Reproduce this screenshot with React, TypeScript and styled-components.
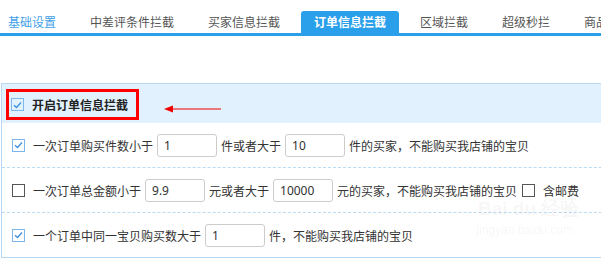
import styled, { createGlobalStyle } from "styled-components";

const GlobalStyle = createGlobalStyle`
  html, body {
    margin: 0;
    padding: 0;
    background: #fff;
    width: 601px;
    height: 267px;
    overflow: hidden;
  }
  body {
    font-family: "Noto Sans CJK SC", "Noto Sans", sans-serif;
    font-size: 12px;
    color: #333;
  }
`;

const Page = styled.div`
  position: relative;
  width: 601px;
  height: 267px;
  overflow: hidden;
`;

const TabBar = styled.div`
  display: flex;
  gap: 8px;
  padding-top: 11px;
  margin-left: -5px;
  width: 620px;
  border-bottom: 3px solid #2aa0ea;
  white-space: nowrap;
`;

const Tab = styled.div<{ $active?: boolean; $first?: boolean }>`
  height: 22px;
  line-height: 22px;
  padding: 0 13px;
  font-size: 12px;
  border-radius: 3px 3px 0 0;
  flex-shrink: 0;
  background: ${(p) => (p.$active ? "#2aa0ea" : "transparent")};
  color: ${(p) => (p.$active ? "#fff" : p.$first ? "#3f9fe8" : "#555")};
  font-weight: ${(p) => (p.$active ? 700 : 400)};
`;

const Panel = styled.div`
  margin: 47px 0 0 1px;
  width: 640px;
  border: 1px solid #b7d7f3;
`;

const Header = styled.div`
  height: 39px;
  box-sizing: border-box;
  padding: 5px 0 0 4px;
  background: #e1f1fd;
  display: flex;
  align-items: flex-start;
`;

const RedBox = styled.div`
  height: 31px;
  box-sizing: border-box;
  border: 3px solid #f00;
  padding: 0 8px 0 2px;
  display: flex;
  align-items: center;
  gap: 8px;
`;

const HeaderText = styled.span`
  font-weight: 700;
  font-size: 12px;
  color: #222;
`;

const Arrow = styled.svg`
  margin: 16px 0 0 25px;
`;

const Row = styled.div<{ $last?: boolean }>`
  height: 44px;
  display: flex;
  align-items: center;
  padding-left: 10px;
  white-space: nowrap;
  border-bottom: ${(p) => (p.$last ? "none" : "1px dashed #b9dcf6")};
`;

const Label = styled.span`
  margin-left: 8px;
  color: #333;
`;

const Text = styled.span`
  color: #333;
`;

const Field = styled.input`
  width: 60px;
  height: 23px;
  box-sizing: border-box;
  margin: 0 4px;
  padding: 0 6px;
  border: 1px solid #ccc;
  border-radius: 3px;
  font-family: "Noto Sans", sans-serif;
  font-size: 12px;
  color: #333;
  outline: none;
`;

const Box = styled.span<{ $checked?: boolean }>`
  width: 13px;
  height: 13px;
  box-sizing: border-box;
  flex-shrink: 0;
  border: 1px solid ${(p) => (p.$checked ? "#7db6ec" : "#555")};
  display: flex;
  align-items: center;
  justify-content: center;
`;

const ExtraBox = styled.span`
  margin: 0 8px 0 5px;
  display: flex;
`;

const Watermark = styled.div`
  position: absolute;
  left: 470px;
  top: 196px;
  color: rgba(0, 0, 0, 0.05);
  font-family: "Liberation Sans", sans-serif;
  pointer-events: none;
  text-align: center;
`;

const WmTop = styled.div`
  font-size: 19px;
  font-weight: 700;
  line-height: 26px;
  padding-left: 8px;
`;

const WmUrl = styled.div`
  font-size: 12px;
  line-height: 16px;
`;

const Check = ({ checked }: { checked?: boolean }) => (
  <Box $checked={checked}>
    {checked && (
      <svg width="9" height="8" viewBox="0 0 9 8">
        <path d="M1 4.2 L3.5 6.5 L8 1.5" fill="none" stroke="#3d8fe0" strokeWidth="1.3" />
      </svg>
    )}
  </Box>
);

const tabs = ["基础设置", "中差评条件拦截", "买家信息拦截", "订单信息拦截", "区域拦截", "超级秒拦", "商品"];

export default function App() {
  return (
    <Page>
      <GlobalStyle />
      <TabBar>
        {tabs.map((t, i) => (
          <Tab key={t} $active={i === 3} $first={i === 0}>
            {t}
          </Tab>
        ))}
      </TabBar>
      <Panel>
        <Header>
          <RedBox>
            <Check checked />
            <HeaderText>开启订单信息拦截</HeaderText>
          </RedBox>
          <Arrow width="57" height="8" viewBox="0 0 57 8">
            <path d="M0 4 L9 0.5 L9 7.5 Z" fill="#e00" />
            <line x1="8" y1="4" x2="57" y2="4" stroke="#e00" strokeWidth="1.2" />
          </Arrow>
        </Header>
        <Row>
          <Check checked />
          <Label>一次订单购买件数小于</Label>
          <Field defaultValue="1" />
          <Text>件或者大于</Text>
          <Field defaultValue="10" />
          <Text>件的买家，不能购买我店铺的宝贝</Text>
        </Row>
        <Row>
          <Check />
          <Label>一次订单总金额小于</Label>
          <Field defaultValue="9.9" />
          <Text>元或者大于</Text>
          <Field defaultValue="10000" />
          <Text>元的买家，不能购买我店铺的宝贝</Text>
          <ExtraBox>
            <Check />
          </ExtraBox>
          <Text>含邮费</Text>
        </Row>
        <Row $last>
          <Check checked />
          <Label>一个订单中同一宝贝购买数大于</Label>
          <Field defaultValue="1" />
          <Text>件，不能购买我店铺的宝贝</Text>
        </Row>
      </Panel>
      <Watermark>
        <WmTop>Bai du 经验</WmTop>
        <WmUrl>jingyan.baidu.com</WmUrl>
      </Watermark>
    </Page>
  );
}
